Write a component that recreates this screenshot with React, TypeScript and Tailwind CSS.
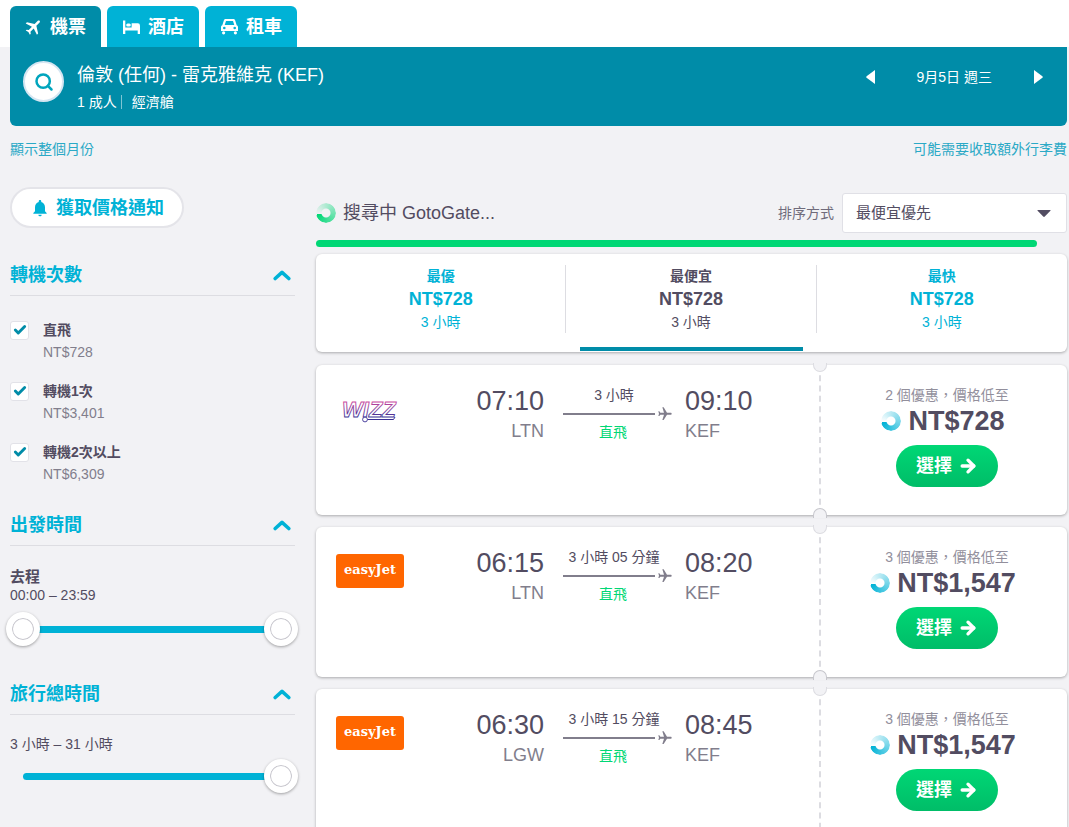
import { useState } from "react";
import type { ReactNode } from "react";
import { ArrowRight, Check, Search } from "lucide-react";
import { MdFlight, MdNotifications } from "react-icons/md";
import { clsx } from "clsx";

const stops = [
  { id: "direct", label: "直飛", price: "NT$728" },
  { id: "one", label: "轉機1次", price: "NT$3,401" },
  { id: "two", label: "轉機2次以上", price: "NT$6,309" },
];

const summary = [
  { id: "best", label: "最優", price: "NT$728", duration: "3 小時" },
  { id: "cheapest", label: "最便宜", price: "NT$728", duration: "3 小時" },
  { id: "fastest", label: "最快", price: "NT$728", duration: "3 小時" },
];

type Flight = {
  airline: "wizz" | "easyjet";
  depart: string;
  from: string;
  arrive: string;
  to: string;
  duration: string;
  deals: number;
  price: string;
};

const flights: Flight[] = [
  { airline: "wizz", depart: "07:10", from: "LTN", arrive: "09:10", to: "KEF", duration: "3 小時", deals: 2, price: "NT$728" },
  { airline: "easyjet", depart: "06:15", from: "LTN", arrive: "08:20", to: "KEF", duration: "3 小時 05 分鐘", deals: 3, price: "NT$1,547" },
  { airline: "easyjet", depart: "06:30", from: "LGW", arrive: "08:45", to: "KEF", duration: "3 小時 15 分鐘", deals: 3, price: "NT$1,547" },
];

function BedIcon() {
  return (
    <svg viewBox="0 0 17 16" className="h-4 w-[17px]" fill="currentColor" aria-hidden="true">
      <path d="M0 1.5h2.3v7H17V15h-2.3v-3.6H2.3V15H0z" />
      <rect x="3.2" y="4.4" width="4.6" height="3.2" rx="1.5" />
      <path d="M8.6 4.2h6.2A2.2 2.2 0 0 1 17 6.4v3H8.6z" />
    </svg>
  );
}

function CarIcon() {
  return (
    <svg viewBox="0 0 17 17" className="size-[17px]" fill="currentColor" aria-hidden="true">
      <path
        fillRule="evenodd"
        d="M4.8 1h7.4c.9 0 1.6.5 1.9 1.3l1.6 4.9c.8.4 1.3 1.1 1.3 2V13H0V9.200c0-.9.5-1.600 1.300-2l1.600-4.900C3.200 1.500 3.900 1 4.800 1zM5 2.900 3.700 7h9.600L12 2.900zM3.300 8.700a1.300 1.300 0 1 0 0 2.600 1.300 1.300 0 0 0 0-2.600zm10.400 0a1.300 1.300 0 1 0 0 2.600 1.300 1.300 0 0 0 0-2.600z"
      />
      <circle cx="2.6" cy="14.8" r="1.6" />
      <circle cx="14.4" cy="14.8" r="1.6" />
    </svg>
  );
}

function Spinner({ green = false }: { green?: boolean }) {
  return (
    <span
      className={clsx(
        "size-5 shrink-0 rounded-full [mask:radial-gradient(circle,transparent_4px,#000_5px)]",
        green
          ? "bg-[conic-gradient(from_260deg,transparent,#00d775)]"
          : "bg-[conic-gradient(from_260deg,transparent,#00b2d6)]"
      )}
    />
  );
}

function WizzLogo() {
  return (
    <svg viewBox="0 0 68 34" className="h-[34px] w-[68px]" role="img" aria-label="Wizz Air">
      <defs>
        <linearGradient id="wizz" x1="0" y1="6" x2="0" y2="30" gradientUnits="userSpaceOnUse">
          <stop offset="0.1" stopColor="#d4479f" />
          <stop offset="0.8" stopColor="#3a2f95" />
        </linearGradient>
      </defs>
      <text
        x="6"
        y="25"
        fontSize="22"
        fontWeight="bold"
        fontStyle="italic"
        fontFamily="'Liberation Sans', Arial, sans-serif"
        fill="#fff"
        stroke="url(#wizz)"
        strokeWidth="0.9"
      >
        WIZZ
      </text>
      <circle cx="29" cy="27.500" r="2.400" fill="#fff" stroke="#3a2f95" strokeWidth="0.900" />
      <path d="M31.500 27.500H57.500l1.500-2.500" fill="none" stroke="#3a2f95" strokeWidth="1" />
    </svg>
  );
}

function EasyJetLogo() {
  return (
    <div className="flex h-[34px] w-[68px] items-center justify-center rounded-[3px] bg-[#ff6600] pb-0.5 font-['DejaVu_Serif',serif] text-[13px] leading-4 font-bold text-white">
      easyJet
    </div>
  );
}

function FilterSection({ title, children }: { title: string; children: ReactNode }) {
  const [open, setOpen] = useState(true);

  return (
    <section>
      <h2>
        <button
          type="button"
          aria-expanded={open}
          onClick={() => setOpen(!open)}
          className="flex h-[41px] w-full items-center justify-between border-b border-[#dddde2] pr-1 text-[18px] leading-6 font-bold text-[#00b2d6]"
        >
          {title}
          <svg
            viewBox="0 0 18 12"
            className={clsx("h-3 w-[18px]", !open && "rotate-180")}
            fill="none"
            stroke="currentColor"
            strokeWidth="3.6"
            strokeLinecap="round"
            strokeLinejoin="round"
            aria-hidden="true"
          >
            <path d="M2.200 9.500 9 3.400 15.800 9.500" />
          </svg>
        </button>
      </h2>
      {open && children}
    </section>
  );
}

const rangeClass =
  "pointer-events-none col-start-1 row-start-1 h-[34px] w-full cursor-pointer appearance-none bg-transparent " +
  "[&::-webkit-slider-thumb]:pointer-events-auto [&::-webkit-slider-thumb]:box-border [&::-webkit-slider-thumb]:size-[34px] [&::-webkit-slider-thumb]:appearance-none " +
  "[&::-webkit-slider-thumb]:rounded-full [&::-webkit-slider-thumb]:border-[6px] [&::-webkit-slider-thumb]:border-white [&::-webkit-slider-thumb]:bg-white " +
  "[&::-webkit-slider-thumb]:shadow-[inset_0_0_0_1px_#c9c8cf,0_1px_3px_rgba(0,0,0,0.35)]";

function Track() {
  return <div className="col-start-1 row-start-1 mx-[17px] h-[7px] self-center rounded-full bg-[#00b2d6]" />;
}

function Sidebar() {
  return (
    <aside className="w-[285px] shrink-0">
      <button
        type="button"
        className="flex h-[41px] items-center gap-1.5 rounded-full border-2 border-[#e4e4e9] bg-white px-[18px] text-[18px] leading-6 font-bold text-[#00b2d6]"
      >
        <MdNotifications className="size-5" />
        獲取價格通知
      </button>

      <div className="mt-[27px] flex flex-col gap-5">
        <FilterSection title="轉機次數">
          <ul className="flex flex-col gap-[17px] pt-[23px]">
            {stops.map((stop) => (
              <li key={stop.id}>
                <label className="flex gap-3.5">
                  <span className="grid h-[22px] place-items-center">
                    <input
                      type="checkbox"
                      defaultChecked
                      className="peer col-start-1 row-start-1 size-[19px] appearance-none rounded-[3px] border border-[#e2e2e8] bg-white"
                    />
                    <Check
                      strokeWidth={5}
                      className="pointer-events-none invisible col-start-1 row-start-1 size-3.5 text-[#008ca8] peer-checked:visible"
                    />
                  </span>
                  <span className="text-[14px] leading-[22px]">
                    <span className="block font-bold">{stop.label}</span>
                    <span className="block text-[#817e8c]">{stop.price}</span>
                  </span>
                </label>
              </li>
            ))}
          </ul>
        </FilterSection>

        <FilterSection title="出發時間">
          <div className="pt-[22px] pb-2">
            <h3 className="text-[15px] leading-[18px] font-bold">去程</h3>
            <p className="text-[14px] leading-[18px]">00:00 – 23:59</p>
            <div className="-mr-[3px] -ml-1 mt-2 grid">
              <Track />
              <input type="range" aria-label="最早出發時間" min={0} max={1439} defaultValue={0} className={rangeClass} />
              <input type="range" aria-label="最晚出發時間" min={0} max={1439} defaultValue={1439} className={rangeClass} />
            </div>
          </div>
        </FilterSection>

        <FilterSection title="旅行總時間">
          <div className="pt-[18px]">
            <p className="text-[14px] leading-[22px]">3 小時 – 31 小時</p>
            <div className="-mr-[3px] -ml-1 mt-1 grid">
              <Track />
              <input type="range" aria-label="旅行總時間" min={3} max={31} defaultValue={31} className={rangeClass} />
            </div>
          </div>
        </FilterSection>
      </div>
    </aside>
  );
}

function FlightCard({ flight }: { flight: Flight }) {
  return (
    <li className="relative flex min-h-[150px] rounded-md bg-white shadow-[0_1px_3px_rgba(0,0,0,0.3)]">
      <div className="flex flex-1 pt-5 pl-5">
        <div className="pt-[7px]">{flight.airline === "wizz" ? <WizzLogo /> : <EasyJetLogo />}</div>
        <div className="flex-1 text-right">
          <div className="text-[27px] leading-8">{flight.depart}</div>
          <div className="text-[18px] leading-7 text-[#817e8c]">{flight.from}</div>
        </div>
        <div className="mr-3 ml-[19px] w-[110px] text-[14px] leading-5">
          <div className="pr-2 text-center whitespace-nowrap">{flight.duration}</div>
          <div className="flex h-[17px] items-center justify-between">
            <span className="h-0.5 w-[92px] bg-[#817e8c]" />
            <MdFlight className="size-4 rotate-90 text-[#817e8c]" />
          </div>
          <div className="pr-2.5 text-center text-[#00d775]">直飛</div>
        </div>
        <div className="w-[134px]">
          <div className="text-[27px] leading-8">{flight.arrive}</div>
          <div className="text-[18px] leading-7 text-[#817e8c]">{flight.to}</div>
        </div>
      </div>

      <div className="relative flex w-[248px] flex-col items-center border-l-2 border-dashed border-[#dcdce1] pt-5 pl-1.5">
        <span className="absolute -top-0.5 -left-2 h-[9px] w-3.5 rounded-b-full border border-t-0 border-[#dcdce1] bg-[#f2f2f5]" />
        <span className="absolute -bottom-[3px] -left-2 h-2.5 w-3.5 rounded-t-full border border-b-0 border-[#c6c6cc] bg-[#f2f2f5]" />
        <div className="text-[14px] leading-5 text-[#928f9c]">{flight.deals} 個優惠，價格低至</div>
        <div className="flex items-center gap-[7px] pr-2 text-[27px] leading-8 font-bold">
          <Spinner />
          {flight.price}
        </div>
        <button
          type="button"
          className="mt-2 flex h-[42px] items-center gap-1.5 rounded-full bg-linear-to-b from-[#00d775] to-[#00bd68] px-5 text-[18px] leading-6 font-bold text-white"
        >
          選擇
          <ArrowRight strokeWidth={4} className="size-5" />
        </button>
      </div>
    </li>
  );
}

function Results() {
  const [active, setActive] = useState("cheapest");

  return (
    <main className="min-w-0 flex-1 pt-1.5">
      <div className="flex items-center justify-between">
        <div className="flex items-center gap-[7px] text-[18px] leading-6">
          <Spinner green />
          搜尋中 GotoGate...
        </div>
        <div className="flex items-center gap-2">
          <label htmlFor="sort" className="text-[14px] leading-5 text-[#6f6b7b]">
            排序方式
          </label>
          <div className="grid w-[225px] items-center">
            <select
              id="sort"
              className="col-start-1 row-start-1 h-10 appearance-none rounded-[3px] border border-[#e0e0e6] bg-white px-[13px] text-[15px]"
            >
              <option>最便宜優先</option>
              <option>最優</option>
              <option>最快</option>
            </select>
            <svg viewBox="0 0 14 7" className="pointer-events-none col-start-1 row-start-1 mr-4 h-[7px] w-3.5 justify-self-end" fill="currentColor">
              <path d="M1 0h12q1 0 .4.8L7.8 6.5q-.8.8-1.6 0L.6.8Q0 0 1 0z" />
            </svg>
          </div>
        </div>
      </div>

      <div role="progressbar" aria-label="搜尋進度" aria-valuenow={96} className="mt-[7px] h-[7px] w-[96%] rounded-full bg-[#00d775]" />

      <div className="mt-[7px] grid grid-cols-3 rounded-md bg-white shadow-[0_1px_3px_rgba(0,0,0,0.3)]">
        {summary.map((item, i) => (
          <button
            key={item.id}
            type="button"
            aria-pressed={active === item.id}
            onClick={() => setActive(item.id)}
            className={clsx("flex flex-col pt-[11px] pb-px", active !== item.id && "text-[#00b2d6]")}
          >
            <span className={clsx("block w-full border-[#dddde2] text-[14px] leading-[22px]", i < 2 && "border-r")}>
              <span className="block font-bold">{item.label}</span>
              <span className="block text-[18px] leading-6 font-bold">{item.price}</span>
              <span className="block">{item.duration}</span>
            </span>
            <span className={clsx("mx-auto mt-3.5 h-1 w-[223px]", active === item.id && "bg-[#008ca8]")} />
          </button>
        ))}
      </div>

      <ul className="mt-[13px] flex flex-col gap-3">
        {flights.map((flight) => (
          <FlightCard key={flight.depart} flight={flight} />
        ))}
      </ul>
    </main>
  );
}

const tabClass = "flex h-[41px] items-center gap-2 rounded-t-md pr-[15px] pl-4 text-[18px] leading-6 font-bold text-white";

export default function App() {
  return (
    <div className="min-h-screen bg-[#f2f2f5] font-['Liberation_Sans','Noto_Sans_CJK_TC',sans-serif] text-[#524c61]">
      <nav className="flex gap-1.5 bg-white pt-1.5 pl-2.5">
        <a href="#flights" className={clsx(tabClass, "bg-[#008ca8]")}>
          <MdFlight className="-mx-0.5 size-5 rotate-45" />
          機票
        </a>
        <a href="#hotels" className={clsx(tabClass, "bg-[#00b2d6]")}>
          <BedIcon />
          酒店
        </a>
        <a href="#cars" className={clsx(tabClass, "bg-[#00b2d6]")}>
          <CarIcon />
          租車
        </a>
      </nav>

      <div className="pr-0.5 pl-2.5">
        <header className="flex items-start justify-between rounded-b-md bg-[#008ca8] py-3.5 pl-[13px] text-white">
          <div className="flex gap-[13px]">
            <button
              type="button"
              aria-label="搜尋"
              className="flex size-[41px] items-center justify-center rounded-full border-2 border-[#d5e6f2] bg-white text-[#00a5bd]"
            >
              <Search strokeWidth={3} className="size-5" />
            </button>
            <div>
              <h1 className="text-[18px] leading-7">倫敦 (任何) - 雷克雅維克 (KEF)</h1>
              <div className="mt-[3px] flex items-center text-[14px] leading-5">
                <span className="pr-1">1 成人</span>
                <span className="h-3.5 border-l border-[#7fc5d3] pr-2.5" />
                <span>經濟艙</span>
              </div>
            </div>
          </div>
          <div className="flex items-center gap-[42px] pt-1.5 pr-6 text-[14px] leading-5">
            <button type="button" aria-label="前一天">
              <svg viewBox="0 0 9 16" className="h-4 w-[9px]" fill="currentColor">
                <path d="M9 1v14L.6 8.8q-.8-.8 0-1.6z" />
              </svg>
            </button>
            <span>9月5日 週三</span>
            <button type="button" aria-label="後一天">
              <svg viewBox="0 0 9 16" className="h-4 w-[9px]" fill="currentColor">
                <path d="M0 1v14l8.4-6.2q.8-.8 0-1.6z" />
              </svg>
            </button>
          </div>
        </header>

        <div className="mt-[13px] flex justify-between text-[14px] leading-5 text-[#2ba9c6]">
          <a href="#month">顯示整個月份</a>
          <a href="#baggage">可能需要收取額外行李費</a>
        </div>

        <div className="mt-7 flex gap-[21px]">
          <Sidebar />
          <Results />
        </div>
      </div>
    </div>
  );
}
